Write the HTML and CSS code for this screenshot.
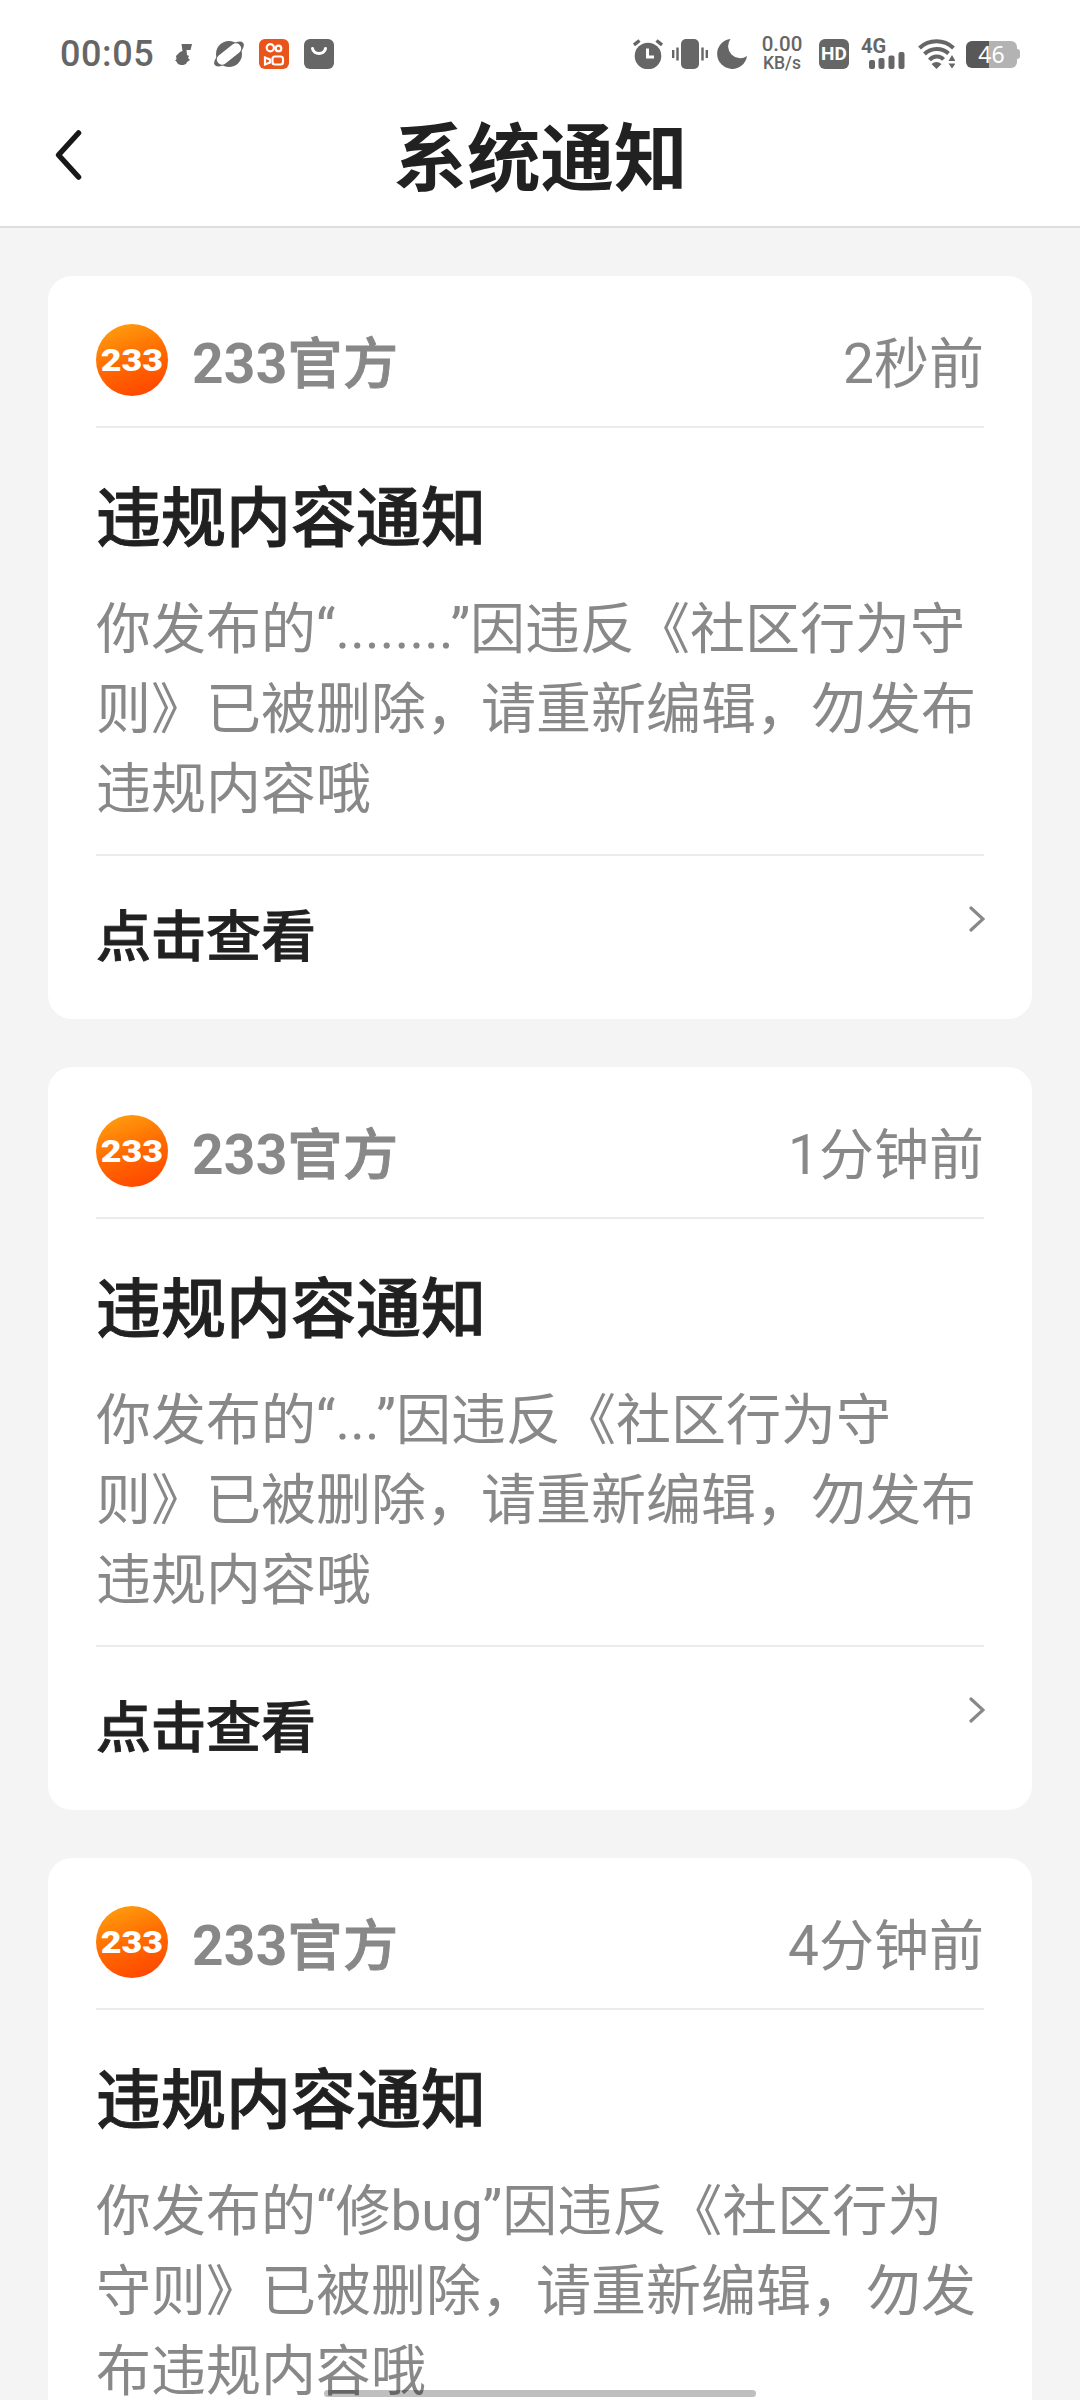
FILE: index.html
```html
<!DOCTYPE html>
<html lang="zh-CN">
<head>
<meta charset="utf-8">
<title>系统通知</title>
<link rel="stylesheet" href="styles.css">
</head>
<body>
<div class="screen">
  <header class="top">
    <div class="status">
      <div class="status-left">
        <span class="clock">00:05</span>
        <svg class="note" width="18" height="22" viewBox="0 0 18 22"><path d="M6.500 1H17l-1.500 6h-4l.5 5 2 1-1 2 2 2-3 2-1 2-4 1.500-4-1.500-2-3H0l1.500-2-.5-3 4-4 2.500-1z"/></svg>
        <svg class="planet" width="32" height="28" viewBox="0 0 32 28"><circle cx="16" cy="14" r="13"/><ellipse cx="16" cy="14" rx="18" ry="7" transform="rotate(-38 16 14)"/><rect class="cut" x="2" y="8.800" width="28" height="10.400" rx="5" transform="rotate(-38 16 14)"/></svg>
        <svg class="video" width="30" height="30" viewBox="0 0 30 30"><rect class="orange" width="30" height="30" rx="6"/><g class="white-line"><circle cx="11.3" cy="8.8" r="3.6"/><circle cx="19.5" cy="9.4" r="2.800"/><rect x="13.500" y="17.500" width="10.500" height="8" rx="2.500"/><path d="M6 18.5l5 2v3l-5 2z"/></g></svg>
        <svg class="bag" width="30" height="30" viewBox="0 0 30 30"><rect width="30" height="30" rx="6"/><path class="white-line smile" d="M8.5 9.5c1 6.500 12 6.500 13 0"/></svg>
      </div>
      <div class="status-right">
        <svg class="alarm" width="30" height="30" viewBox="0 0 30 30"><circle cx="15" cy="17" r="13.300"/><path class="gray-line" d="M1 6l5.500-4.500M29 6l-5.500-4.500"/><path class="white-line" d="M14.500 9.500v8.500h6.500"/></svg>
        <svg class="vibrate" width="36" height="30" viewBox="0 0 36 30"><rect x="9" width="18" height="30" rx="5"/><path class="gray-line thin" d="M1.200 11v8M5.500 8.500v13M34.800 11v8M30.500 8.500v13"/></svg>
        <svg class="moon" width="30" height="30" viewBox="0 0 30 30"><path d="M13.500 0A15 15 0 1 0 30 17A12 12 0 0 1 13.500 0z"/></svg>
        <div class="speed"><span class="rate">0.00</span><span class="unit">KB/s</span></div>
        <div class="hd"><span>HD</span></div>
        <div class="signal"><span class="net">4G</span>
          <svg class="bars" width="36" height="17" viewBox="0 0 36 17"><rect y="8" width="6" height="9" rx="2"/><rect x="9.500" y="6" width="6" height="11" rx="2"/><rect x="19.500" y="3.500" width="6" height="13.500" rx="2"/><rect x="29.500" y="0" width="6" height="17" rx="2"/></svg>
        </div>
        <svg class="wifi" width="37" height="30" viewBox="0 0 37 30"><path class="arc" d="M1.500 9C11 0 26 0 35.500 9M6.500 15C13 8.500 24 8.500 30.500 14.500M11.500 21C15.500 16.500 22 16.500 25.500 20.500"/><path d="M13.500 25Q18.500 21 23.500 25L18.500 30z"/><path d="M30.500 22l3.500-6 3.500 6zM30.500 24.500h7L34 29.500z"/></svg>
        <div class="battery"><div class="cell">46</div><div class="cap"></div></div>
      </div>
    </div>
    <div class="bar">
      <svg class="back" width="32" height="52" viewBox="0 0 32 52"><path d="M25.500 4L5.500 26L25.500 48"/></svg>
      <h1>系统通知</h1>
    </div>
  </header>
  <main class="list">
    <article class="card">
      <div class="from"><div class="avatar"><span>233</span></div><span class="name">233<b>官方</b></span><time>2秒前</time></div>
      <h2>违规内容通知</h2>
      <p>你发布的“<span class="dots">........</span>”因违反《社区行为守<br>则》已被删除，请重新编辑，勿发布<br>违规内容哦</p>
      <div class="more"><span class="action">点击查看</span><svg class="chev" width="16" height="26" viewBox="0 0 16 26"><path d="M2 2L14 13L2 24"/></svg></div>
    </article>
    <article class="card">
      <div class="from"><div class="avatar"><span>233</span></div><span class="name">233<b>官方</b></span><time>1分钟前</time></div>
      <h2>违规内容通知</h2>
      <p>你发布的“<span class="dots">...</span>”因违反《社区行为守<br>则》已被删除，请重新编辑，勿发布<br>违规内容哦</p>
      <div class="more"><span class="action">点击查看</span><svg class="chev" width="16" height="26" viewBox="0 0 16 26"><path d="M2 2L14 13L2 24"/></svg></div>
    </article>
    <article class="card">
      <div class="from"><div class="avatar"><span>233</span></div><span class="name">233<b>官方</b></span><time>4分钟前</time></div>
      <h2>违规内容通知</h2>
      <p>你发布的“修bug”因违反《社区行为<br>守则》已被删除，请重新编辑，勿发<br>布违规内容哦</p>
    </article>
  </main>
  <div class="gesture"></div>
</div>
</body>
</html>
```
FILE: styles.css
```css
* { box-sizing: border-box; margin: 0; padding: 0; }
body { font-family: Roboto, "Noto Sans CJK SC", sans-serif; background: #f4f4f4; color: #212121; }
.screen { position: relative; width: 1080px; height: 2400px; overflow: hidden; background: #f4f4f4; }
svg { display: block; flex: none; fill: #666; }

.top { height: 228px; background: #fff; border-bottom: 2px solid #dedede; }
.status { height: 108px; display: flex; justify-content: space-between; padding: 0 60px 0 60px; color: #666; }
.status-left, .status-right { display: flex; align-items: center; height: 108px; }
.clock { width: 115px; font-size: 36px; font-weight: 500; letter-spacing: 0.6px; line-height: 40px; }
.planet { margin-left: 20px; }
.video { margin-left: 14px; }
.bag { margin-left: 15px; }
.cut { fill: #fff; }
.orange { fill: #e8541a; }
.white-line { fill: none; stroke: #fff; stroke-width: 2.2; }
.smile { stroke-width: 3; stroke-linecap: round; }
.alarm .white-line { stroke-width: 3; }
.gray-line { fill: none; stroke: #666; stroke-width: 3.5; }
.gray-line.thin { stroke-width: 2.4; }
.vibrate { margin-left: 9px; }
.moon { margin-left: 9px; }
.speed { width: 42px; margin-left: 14px; display: flex; flex-direction: column; align-items: center; font-weight: 500; white-space: nowrap; }
.rate { font-size: 20.5px; line-height: 19px; }
.unit { font-size: 17.5px; line-height: 19px; }
.hd { display: flex; align-items: center; justify-content: center; width: 30px; height: 30px; margin-left: 16px; border-radius: 6px; background: #666; color: #fff; font-size: 19px; font-weight: 700; line-height: 30px; }
.signal { width: 44px; height: 30px; margin-left: 12px; display: flex; flex-direction: column; justify-content: space-between; }
.net { height: 13px; font-size: 20px; font-weight: 700; line-height: 15px; }
.bars { align-self: flex-end; }
.wifi { margin-left: 13px; }
.arc { fill: none; stroke: #666; stroke-width: 4; }
.battery { display: flex; align-items: center; margin-left: 11px; }
.cell { width: 51px; height: 27px; border-radius: 6px; background: linear-gradient(90deg, #585858 46%, #b3b3b3 46%); color: #fff; font: 23px/27px "Noto Sans", sans-serif; text-align: center; }
.cap { width: 3px; height: 10px; border-radius: 0 3px 3px 0; background: #b3b3b3; }

.bar { height: 118px; display: grid; grid-template-columns: 120px 1fr 120px; }
.back { margin: 21px 0 0 53px; fill: none; stroke: #181818; stroke-width: 5.5; stroke-linecap: round; stroke-linejoin: round; }
h1 { padding: 3px 0 0 1px; font-size: 73.5px; line-height: 98px; font-weight: 700; text-align: center; }

.list { display: flex; flex-direction: column; gap: 48px; padding: 48px; }
.card { flex: none; height: 743px; padding: 48px 48px 0; border-radius: 24px; background: #fff; }
.from { display: flex; height: 104px; align-items: flex-start; border-bottom: 2px solid #ebebeb; color: #888; font-size: 55px; line-height: 80px; }
.avatar { width: 72px; height: 72px; margin-right: 24px; border-radius: 50%; display: flex; align-items: center; justify-content: center; background: linear-gradient(160deg, #ffa010 5%, #ff6a00 50%, #ff4800 90%); color: #fff; font: 900 32px/72px Roboto, sans-serif; }
.avatar span { transform: scaleX(1.12); }
.name { font-weight: 700; letter-spacing: 0.3px; }
.name b, h2, .action { font-weight: 500; -webkit-text-stroke: 0.9px currentColor; }
time { margin-left: auto; }
h2 { height: 160px; padding-top: 49px; font-size: 65px; line-height: 84px; }
p { height: 268px; padding-top: 1px; border-bottom: 2px solid #ebebeb; color: #888; font-size: 55px; line-height: 80px; white-space: nowrap; }
.dots { margin-right: -3.5px; letter-spacing: 0.3px; }
.more { display: flex; justify-content: space-between; padding-top: 38px; }
.action { padding-top: 3px; font-size: 55px; line-height: 80px; }
.chev { margin: 12px -1px 0 0; fill: none; stroke: #888; stroke-width: 3.2; stroke-linecap: round; }
.gesture { position: absolute; left: 324px; top: 2390px; width: 432px; height: 7px; border-radius: 4px; background: rgba(0, 0, 0, 0.25); }
```
